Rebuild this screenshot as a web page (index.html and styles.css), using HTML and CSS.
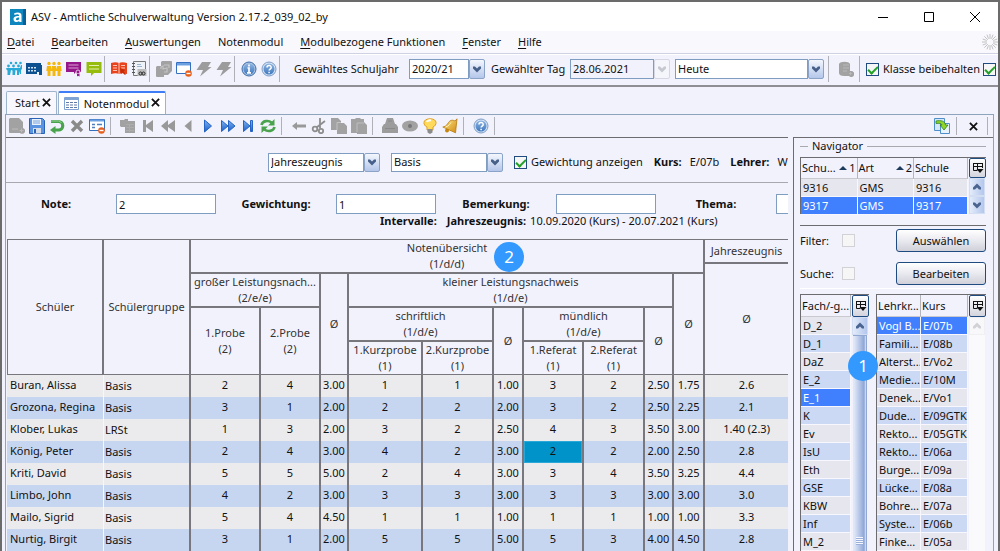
FILE: index.html
```html
<!DOCTYPE html>
<html lang="de">
<head>
<meta charset="utf-8">
<title>ASV - Amtliche Schulverwaltung</title>
<link rel="stylesheet" href="styles.css">
</head>
<body>
<svg class="defs" width="0" height="0" aria-hidden="true">
  <defs>
    <linearGradient id="blue" x1="0" y1="0" x2="0" y2="1"><stop offset="0" stop-color="#7db4f0"/><stop offset="1" stop-color="#1a5fc8"/></linearGradient>
    <linearGradient id="disc" x1="0" y1="0" x2="0" y2="1"><stop offset="0" stop-color="#8db4e2"/><stop offset="1" stop-color="#3f78bd"/></linearGradient>
    <linearGradient id="gold" x1="0" y1="0" x2="1" y2="1"><stop offset="0" stop-color="#ffe98a"/><stop offset="1" stop-color="#d08a10"/></linearGradient>
    <symbol id="help" viewBox="0 0 16 16"><circle cx="8" cy="8" r="7" fill="#d5e3f5" stroke="#7d9cc6"/><circle cx="8" cy="8" r="5.5" fill="url(#disc)"/><path d="M6 6.600c0-2.800 4.200-2.700 4.200-.2 0 1.600-2.100 1.700-2.100 3.200M8.100 10.800v1.400" fill="none" stroke="#fff" stroke-width="1.500"/></symbol>
    <symbol id="columns" viewBox="0 0 12 12"><path d="M1 1.500h10M1.500 1v7.500h4M10.500 1v5M1 4.500h10M5.500 1v7" fill="none" stroke="#111"/><path d="M4.500 7h7L8 11z" fill="#111"/></symbol>
    <symbol id="chev" viewBox="0 0 10 8"><path d="M1 1.500h2L5 3.500l2-2h2V3.500l-4 4-4-4z" fill="currentColor"/></symbol>
    <symbol id="close" viewBox="0 0 10 10"><path d="M1 1l8 8M9 1L1 9" fill="none" stroke="#111" stroke-width="2"/></symbol>
  </defs>
</svg>

<div class="window">
  <header class="titlebar">
    <svg class="logo" viewBox="0 0 16 16"><rect width="16" height="16" fill="#0d87bd"/><path d="M13 0h3v16h-3z" fill="#075f99"/><path d="M4 4.500C7 3 11.500 2.900 11.500 6.500V13H9.300v-1C7 14 3.500 13.200 3.500 10.300 3.500 7.500 6.500 7 9.100 7c0-2.300-2.500-1.900-4.500-.900zM9.200 8.500c-5 0-3.500 4.600 0 1.800z" fill="#fff"/></svg>
    <h1 class="title">ASV - Amtliche Schulverwaltung Version 2.17.2_039_02_by</h1>
    <div class="winbuttons">
      <button aria-label="Minimieren"><svg viewBox="0 0 10 10"><path d="M0 5.500h10" stroke="#000"/></svg></button>
      <button aria-label="Maximieren"><svg viewBox="0 0 10 10"><path d="M.5.5h9v9h-9z" fill="none" stroke="#000"/></svg></button>
      <button aria-label="Schließen"><svg viewBox="0 0 10 10"><path d="M0 0l10 10M10 0L0 10" stroke="#000"/></svg></button>
    </div>
  </header>

  <nav class="menubar">
    <a href="#"><u>D</u>atei</a><a href="#"><u>B</u>earbeiten</a><a href="#"><u>A</u>uswertungen</a><a href="#">Notenmodul</a><a href="#"><u>M</u>odulbezogene Funktionen</a><a href="#"><u>F</u>enster</a><a href="#"><u>H</u>ilfe</a>
    <svg class="spinner" viewBox="0 0 16 16"><path d="M8 0v5M8 11v5M0 8h5M11 8h5M2.300 2.300l3.500 3.500M10.200 10.200l3.500 3.500M13.700 2.300l-3.500 3.500M5.800 10.200l-3.500 3.500M5 .7l1.500 4M9.500 11.300l1.500 4M11 .7L9.500 4.700M6.500 11.300l-1.500 4M.7 5l4 1.500M11.300 9.500l4 1.500M.7 11l4-1.500M11.300 6.500l4-1.500" stroke="#bbb" stroke-width=".9"/></svg>
  </nav>

  <div class="mainbar">
    <button class="tool" aria-label="Schüler"><svg viewBox="0 0 16 16"><g fill="#29a9d6"><circle cx="5" cy="2" r="1.300"/><circle cx="10" cy="2" r="1.300"/><circle cx="14.500" cy="2" r="1.300"/><circle cx="2.500" cy="5" r="1.400"/><circle cx="7.500" cy="5" r="1.400"/><circle cx="12.500" cy="5" r="1.400"/><path d="M.5 7h13.500l1-3h1v4l-1 1v4h-1l-.5-3-.5 4h-2V9.500L9.500 9l-.500 5H6.500V9.500L5 9l-1 5H1.500V9.500L0 8z"/></g></svg></button>
    <button class="tool" aria-label="Schule"><svg viewBox="0 0 16 16"><path d="M0 2h15v2h1v10h-3v-3h-2v2H0z" fill="#0d4f8f"/><path d="M2 6h2v1.500H2zM5 6h2v1.500H5zM8 6h2v1.500H8zM2 9h2v1.500H2zM5 9h2v1.500H5zM8 9h2v1.500H8z" fill="#cfe0f0"/></svg></button>
    <button class="tool" aria-label="Klassen"><svg viewBox="0 0 16 16"><g fill="#f4b70e"><circle cx="3" cy="2.500" r="1.700"/><circle cx="8" cy="2.500" r="1.700"/><circle cx="13" cy="2.500" r="1.700"/><path d="M1 5h4l.7 5H4.500v5h-3v-5H.3zM6 5h4l.7 5H9.500v5h-3v-5H5.300zM11 5h4l.7 5h-1.200v5h-3v-5h-1.200z"/></g></svg></button>
    <button class="tool" aria-label="Lehrer"><svg viewBox="0 0 16 16"><path d="M0 1h15v10h-5l-2 2v-2H0z" fill="#95178a"/><path d="M2.500 4h10M2.500 7h10" stroke="#d9a3d5"/><circle cx="12" cy="11" r="2" fill="#95178a" stroke="#e8c8e6"/><path d="M11 13v2.500l1-.8 1.500.8V13z" fill="#95178a"/></svg></button>
    <button class="tool" aria-label="Unterricht"><svg viewBox="0 0 16 16"><path d="M.5 1h15v11H8l-3 3v-3H.5z" fill="#96bd0d"/><path d="M3 4.500h10M3 8h10" stroke="#e3efb0"/></svg></button>
    <i class="sep"></i>
    <button class="tool" aria-label="Notenbuch"><svg viewBox="0 0 16 16"><path d="M0 2c3-1 6-1 8 0 2-1 5-1 8 0v11c-3-1-6-1-8 0-2-1-5-1-8 0z" fill="#e8431c"/><path d="M2 4.500h4M2 7h4M2 9.500h4M10 4.500h4M10 7h4M8 2v11" stroke="#ffc6b5"/><path d="M9 7l1 6 1.500-1.500L14 14l1-1-2.500-2.500L14 9z" fill="#c22c08"/></svg></button>
    <button class="tool" aria-label="Adressbuch"><svg viewBox="0 0 16 16"><path d="M2.500.5h12v14h-12z" fill="#eef1f6" stroke="#777"/><path d="M1 2.500h3M1 5.500h3M1 8.500h3M1 11.500h3" stroke="#555"/><path d="M6 3.500h4M6 5.500h5" stroke="#9db4d0"/><rect x="6.500" y="8" width="9" height="7" fill="#bbb"/><path d="M8 12.500c0-2 3-2 3 0s3 2 3 0-3-2-3 0-3 2-3 0z" fill="none" stroke="#222"/></svg></button>
    <i class="sep"></i>
    <button class="tool" aria-label="Fenster wechseln" disabled><svg viewBox="0 0 16 16"><path d="M6 0h9a1 1 0 0 1 1 1v9l-4 4H8v2H1a1 1 0 0 1-1-1V6l1-1h4V1z" fill="#a2a2a2"/><path d="M5 8V6l2-1v3l4-1v4H8M8 4h5v3" fill="none" stroke="#c4c4c4" stroke-width="1.200"/></svg></button>
    <button class="tool" aria-label="Fenster schließen"><svg viewBox="0 0 16 16"><path d="M.5 1.500h14v11h-14z" fill="#fff" stroke="#3570c0"/><path d="M1 2h13v2.500H1z" fill="#6ca0e0"/><circle cx="12.500" cy="12.500" r="3.300" fill="#e8601c"/><path d="M10.500 12.500h4" stroke="#fff" stroke-width="1.400"/></svg></button>
    <button class="tool" aria-label="Aktion 1" disabled><svg viewBox="0 0 16 16"><path d="M6 1h9l-3 5h3.500L4 15.500 7 9H.5z" fill="#9c9c9c"/></svg></button>
    <button class="tool" aria-label="Aktion 2" disabled><svg viewBox="0 0 16 16"><path d="M6 1h9l-3 5h3.500L4 15.500 7 9H.5z" fill="#9c9c9c"/></svg></button>
    <i class="sep"></i>
    <button class="tool" aria-label="Information"><svg viewBox="0 0 16 16"><circle cx="8" cy="8" r="7" fill="#a9c2e2" stroke="#3f6da8"/><circle cx="8" cy="8" r="5.500" fill="url(#disc)"/><path d="M8 3.500v2M6.500 7H8v4.500M6 11.800h4" fill="none" stroke="#fff" stroke-width="1.700"/></svg></button>
    <button class="tool" aria-label="Hilfe"><svg><use href="#help"/></svg></button>
    <i class="sep"></i>
    <label class="year-label" for="year">Gewähltes Schuljahr</label>
    <span class="combo combo-year"><select id="year"><option>2020/21</option></select><i><svg><use href="#chev"/></svg></i></span>
    <label class="day-label" for="day">Gewählter Tag</label>
    <span class="combo combo-day off"><input id="day" type="text" value="28.06.2021"><i><svg><use href="#chev"/></svg></i></span>
    <span class="combo combo-today"><select aria-label="Stichtag"><option>Heute</option></select><i><svg><use href="#chev"/></svg></i></span>
    <i class="sep"></i>
    <button class="tool wide" aria-label="Daten" disabled><svg viewBox="0 0 16 16"><path d="M1 3c1-3 10-3 11 0v7h1a3 3 0 1 1-2 5H6c-3 0-5-1-5-3z" fill="#a2a2a2"/><path d="M5 4h6M5 7h6M5 10h4M12.500 11v3M11 12.500h3" stroke="#b8b8b8"/></svg></button>
    <i class="sep"></i>
    <label class="check"><input type="checkbox" checked>Klasse beibehalten</label>
    <input type="checkbox" checked aria-label="Fach beibehalten">
  </div>

  <main class="workspace">
    <div class="tabs">
      <button class="tab">Start<svg><use href="#close"/></svg></button>
      <button class="tab active"><svg class="grid-icon" viewBox="0 0 15 13"><path d="M.5.5h14v12H.5z" fill="#fff" stroke="#7fa3d4"/><path d="M1 2h13" stroke="#7fa3d4" stroke-width="2"/><path d="M2 5.500h11M2 8h11M2 10.500h11" stroke="#5d7ba6" stroke-dasharray="3 1"/></svg>Notenmodul<svg><use href="#close"/></svg></button>
    </div>

    <div class="panel">
      <div class="modulebar">
        <button class="tool" aria-label="Neu" disabled><svg viewBox="0 0 16 16"><path d="M1 0h9l4 4v6a3 3 0 1 1-3 5H1a1 1 0 0 1-1-1V1z" fill="#a2a2a2"/><path d="M3 11h6M12.500 10.500v4M10.500 12.500h4" stroke="#bbb"/></svg></button>
        <button class="tool" aria-label="Speichern"><svg viewBox="0 0 16 16"><path d="M.5.5h13l2 2v13H.5z" fill="#5a94e0" stroke="#2c62b4"/><path d="M3 1h9v6H3z" fill="#e8f1fc"/><path d="M4 3h7M4 5h7" stroke="#7ba4dc"/><path d="M4 10h8v5.500H4z" fill="#d8dfe9"/><path d="M5 11h2v4H5z" fill="#2c62b4"/></svg></button>
        <button class="tool" aria-label="Rückgängig"><svg viewBox="0 0 16 16"><path d="M2 3.500h7.500a4 4 0 0 1 0 8.500H6" fill="none" stroke="#49a34c" stroke-width="3.200"/><path d="M6.500 8v8L1 12z" fill="#49a34c"/><path d="M2 3h7.500a4 4 0 0 1 3 2" fill="none" stroke="#9cd49b"/></svg></button>
        <button class="tool" aria-label="Löschen" disabled><svg viewBox="0 0 16 16"><path d="M3 3l10 10M13 3L3 13" stroke="#8a8a8a" stroke-width="3.400"/></svg></button>
        <button class="tool" aria-label="Formular schließen"><svg viewBox="0 0 16 16"><path d="M.5 1.500h15v11H.5z" fill="#fff" stroke="#3570c0"/><path d="M1 2.500h14" stroke="#6ca0e0" stroke-width="2"/><path d="M3 6.500h3M8 6.500h5M3 9.500h3" stroke="#4f7fbf" stroke-width="1.500"/><circle cx="12.500" cy="12.500" r="3.300" fill="#e8601c"/><path d="M10.500 12.500h4" stroke="#fff" stroke-width="1.400"/></svg></button>
        <i class="sep"></i>
        <button class="tool" aria-label="Liste" disabled><svg viewBox="0 0 16 16"><path d="M0 2h4l1-1h3v2h7v12H5V9H1L0 8z" fill="#a2a2a2"/><path d="M6 6.500h8M6 9.500h8M6 12.500h8M9.500 6v8" stroke="#adadad"/></svg></button>
        <button class="tool" aria-label="Erster" disabled><svg viewBox="0 0 16 16"><path d="M3 2h3v5l7-5v12L6 9v5H3z" fill="#999"/></svg></button>
        <button class="tool" aria-label="Schnell zurück" disabled><svg viewBox="0 0 16 16"><path d="M8 2v5l7-5v12L8 9v5L1 8z" fill="#999"/></svg></button>
        <button class="tool" aria-label="Zurück" disabled><svg viewBox="0 0 16 16"><path d="M11.500 2v12L4.500 8z" fill="#999"/></svg></button>
        <button class="tool" aria-label="Weiter"><svg viewBox="0 0 16 16"><path d="M4.500 2v12l7-6z" fill="url(#blue)" stroke="#2563c4"/></svg></button>
        <button class="tool" aria-label="Schnell vor"><svg viewBox="0 0 16 16"><path d="M1.500 2.500v11L8 8zM8.500 2.500v11L15 8z" fill="url(#blue)" stroke="#2563c4"/></svg></button>
        <button class="tool" aria-label="Letzter"><svg viewBox="0 0 16 16"><path d="M3.500 2.500v11L10 8zM10.500 2.500h2v11h-2z" fill="url(#blue)" stroke="#2563c4"/></svg></button>
        <button class="tool" aria-label="Aktualisieren"><svg viewBox="0 0 16 16"><g fill="none" stroke="#49a34c" stroke-width="2.600"><path d="M1.500 7c1-4.500 7-5 10-2.500"/><path d="M14.500 9c-1 4.500-7 5-10 2.500"/></g><path d="M14.500 1v6.500H8zM1.500 15V8.500H8z" fill="#49a34c"/></svg></button>
        <i class="sep"></i>
        <button class="tool" aria-label="Pfeil" disabled><svg viewBox="0 0 16 16"><path d="M1 8l5-4v2.500h9v3H6V12z" fill="#999"/></svg></button>
        <button class="tool" aria-label="Ausschneiden" disabled><svg viewBox="0 0 16 16"><g fill="none" stroke="#8d8d8d" stroke-width="1.800"><circle cx="4" cy="11" r="2.300"/><circle cx="10" cy="13" r="2.200"/><path d="M14 3L5.500 9.500M9 0v10.500"/></g></svg></button>
        <button class="tool" aria-label="Kopieren" disabled><svg viewBox="0 0 16 16"><path d="M0 0h7l3 3v2h3l3 3v8H6v-4H0z" fill="#a2a2a2"/><path d="M6 12V4.500h4" fill="none" stroke="#c2c2c2"/></svg></button>
        <button class="tool" aria-label="Einfügen" disabled><svg viewBox="0 0 16 16"><path d="M0 1h4l1-1h4l1 1h3v3l3 3v9H6v-1H0z" fill="#a2a2a2"/><path d="M6 14V5h7" fill="none" stroke="#bdbdbd"/></svg></button>
        <i class="sep"></i>
        <button class="tool" aria-label="Drucken" disabled><svg viewBox="0 0 16 16"><path d="M5 0h6l2 6h1l2 3v6H0V9l2-3h1z" fill="#9c9c9c"/><path d="M3 10.500h10M6 3h4" stroke="#8a8a8a"/></svg></button>
        <button class="tool" aria-label="Vorschau" disabled><svg viewBox="0 0 16 16"><ellipse cx="8" cy="8" rx="8" ry="5.500" fill="#a2a2a2"/><circle cx="8" cy="8" r="2" fill="#777"/></svg></button>
        <button class="tool" aria-label="Hinweis"><svg viewBox="0 0 16 16"><path d="M8 .8c8 0 7 6.700 3 8.200v3H5V9C1 7.500 0 .8 8 .8z" fill="#ffd95a" stroke="#dfa020"/><path d="M5 4c.5-1.500 3-2 4-1.500" stroke="#fff" stroke-width="2" fill="none"/><path d="M5.500 11h5v3.500L8 16l-2.500-1.500z" fill="#8c8c8c"/></svg></button>
        <button class="tool" aria-label="Erinnerung"><svg viewBox="0 0 16 16"><circle cx="5" cy="12.500" r="2" fill="#c9850c"/><path d="M15 .8l-1.500 14L.8 9C4.500 8.500 5 6.500 6.500 4.500c2-3 4.500-2.500 6.500-1.500z" fill="url(#gold)" stroke="#b8780a" stroke-width=".8"/><path d="M3.500 9C7 8 8 6 9 4.500" fill="none" stroke="#fff3b8"/></svg></button>
        <i class="sep"></i>
        <button class="tool" aria-label="Hilfe"><svg><use href="#help"/></svg></button>
        <i class="sep"></i>
        <span class="spacer"></span>
        <button class="tool" aria-label="Exportieren"><svg viewBox="0 0 16 16"><path d="M.5.500h10v12H.5z" fill="#d4e8fa" stroke="#4e8ecb"/><path d="M6.500 5.500h9v10h-9z" fill="#e6f2fd" stroke="#4e8ecb"/><path d="M2 3c5-1 9 0 9.500 4H14l-4 5-4-5h2C7.500 5.500 5 5 2 5.500z" fill="#8fd42a" stroke="#2d7d1e" stroke-width=".8"/></svg></button>
        <i class="sep"></i>
        <button class="tool" aria-label="Modul schließen"><svg class="small"><use href="#close"/></svg></button>
        <i class="sep"></i>
      </div>

      <div class="split">
        <section class="content">
          <div class="filters">
            <span class="combo combo-filter"><select aria-label="Zeugnisart"><option>Jahreszeugnis</option></select><i><svg><use href="#chev"/></svg></i></span>
            <span class="combo combo-filter"><select aria-label="Schülergruppe"><option>Basis</option></select><i><svg><use href="#chev"/></svg></i></span>
            <label class="check"><input type="checkbox" checked>Gewichtung anzeigen</label>
            <span><b>Kurs:</b>E/07b</span>
            <span><b>Lehrer:</b>W</span>
          </div>
          <div class="entry">
            <div class="fields">
              <label for="note">Note:</label><input id="note" type="text" value="2">
              <label for="gew">Gewichtung:</label><input id="gew" type="text" value="1">
              <label for="bem">Bemerkung:</label><input id="bem" type="text">
              <label for="thema">Thema:</label><input id="thema" type="text">
            </div>
            <p class="intervals"><b>Intervalle:</b><b>Jahreszeugnis:</b>10.09.2020 (Kurs) - 20.07.2021 (Kurs)</p>
          </div>

          <div class="gradewrap">
            <table class="grades">
              <colgroup><col class="c-name"><col class="c-group"><col class="c-p1"><col class="c-p2"><col class="c-a1"><col class="c-k1"><col class="c-k2"><col class="c-a2"><col class="c-r1"><col class="c-r2"><col class="c-a3"><col class="c-a4"><col></colgroup>
              <thead>
                <tr class="h-top"><th rowspan="5">Schüler</th><th rowspan="5">Schülergruppe</th><th colspan="10" rowspan="2">Notenübersicht<br>(1/d/d)</th><th>Jahreszeugnis</th></tr>
                <tr class="h-gap"><th rowspan="4">Ø</th></tr>
                <tr class="h-row"><th colspan="2">großer Leistungsnach...<br>(2/e/e)</th><th rowspan="3">Ø</th><th colspan="6">kleiner Leistungsnachweis<br>(1/d/e)</th><th rowspan="3">Ø</th></tr>
                <tr class="h-row"><th rowspan="2">1.Probe<br>(2)</th><th rowspan="2">2.Probe<br>(2)</th><th colspan="2">schriftlich<br>(1/d/e)</th><th rowspan="2">Ø</th><th colspan="2">mündlich<br>(1/d/e)</th><th rowspan="2">Ø</th></tr>
                <tr class="h-last"><th>1.Kurzprobe<br>(1)</th><th>2.Kurzprobe<br>(1)</th><th>1.Referat<br>(1)</th><th>2.Referat<br>(1)</th></tr>
              </thead>
              <tbody>
                <tr><td>Buran, Alissa</td><td>Basis</td><td>2</td><td>4</td><td>3.00</td><td>1</td><td>1</td><td>1.00</td><td>3</td><td>2</td><td>2.50</td><td>1.75</td><td>2.6</td></tr>
                <tr><td>Grozona, Regina</td><td>Basis</td><td>3</td><td>1</td><td>2.00</td><td>2</td><td>2</td><td>2.00</td><td>3</td><td>2</td><td>2.50</td><td>2.25</td><td>2.1</td></tr>
                <tr><td>Klober, Lukas</td><td>LRSt</td><td>1</td><td>3</td><td>2.00</td><td>3</td><td>2</td><td>2.50</td><td>4</td><td>3</td><td>3.50</td><td>3.00</td><td>1.40 (2.3)</td></tr>
                <tr><td>König, Peter</td><td>Basis</td><td>2</td><td>4</td><td>3.00</td><td>4</td><td>2</td><td>3.00</td><td class="current">2</td><td>2</td><td>2.00</td><td>2.50</td><td>2.8</td></tr>
                <tr><td>Kriti, David</td><td>Basis</td><td>5</td><td>5</td><td>5.00</td><td>2</td><td>4</td><td>3.00</td><td>3</td><td>4</td><td>3.50</td><td>3.25</td><td>4.4</td></tr>
                <tr><td>Limbo, John</td><td>Basis</td><td>4</td><td>2</td><td>3.00</td><td>3</td><td>3</td><td>3.00</td><td>3</td><td>3</td><td>3.00</td><td>3.00</td><td>3.0</td></tr>
                <tr><td>Mailo, Sigrid</td><td>Basis</td><td>5</td><td>4</td><td>4.50</td><td>1</td><td>1</td><td>1.00</td><td>1</td><td>1</td><td>1.00</td><td>1.00</td><td>3.3</td></tr>
                <tr><td>Nurtig, Birgit</td><td>Basis</td><td>3</td><td>1</td><td>2.00</td><td>5</td><td>5</td><td>5.00</td><td>5</td><td>3</td><td>4.00</td><td>4.50</td><td>2.8</td></tr>
              </tbody>
            </table>
            <span class="badge badge-grades">2</span>
          </div>
        </section>

        <aside class="navigator">
          <h2 class="legend">Navigator</h2>
          <div class="list schools">
            <table>
              <colgroup><col><col><col class="c-school"></colgroup>
              <thead><tr><th><span>Schu...<em>1</em></span></th><th><span>Art<em>2</em></span></th><th>Schule</th></tr></thead>
              <tbody><tr><td>9316</td><td>GMS</td><td>9316</td></tr><tr class="sel"><td>9317</td><td>GMS</td><td>9317</td></tr></tbody>
            </table>
            <div class="scroll">
              <button class="colbtn" aria-label="Spalten"><svg><use href="#columns"/></svg></button>
              <button class="arrow" aria-label="Nach oben"><svg class="up"><use href="#chev"/></svg></button>
              <button class="arrow" aria-label="Nach unten"><svg><use href="#chev"/></svg></button>
            </div>
          </div>
          <div class="actions">
            <label for="filter">Filter:</label><input id="filter" class="off" type="checkbox"><button class="action">Auswählen</button>
            <label for="suche">Suche:</label><input id="suche" class="off" type="checkbox"><button class="action">Bearbeiten</button>
          </div>
          <div class="lists">
            <div class="list subjects">
              <table>
                <thead><tr><th>Fach/-g...</th></tr></thead>
                <tbody><tr><td>D_2</td></tr><tr><td>D_1</td></tr><tr><td>DaZ</td></tr><tr><td>E_2</td></tr><tr class="sel"><td>E_1</td></tr><tr><td>K</td></tr><tr><td>Ev</td></tr><tr><td>IsU</td></tr><tr><td>Eth</td></tr><tr><td>GSE</td></tr><tr><td>KBW</td></tr><tr><td>Inf</td></tr><tr><td>M_2</td></tr></tbody>
              </table>
              <div class="scroll">
                <button class="colbtn" aria-label="Spalten"><svg><use href="#columns"/></svg></button>
                <button class="arrow" aria-label="Nach oben"><svg class="up"><use href="#chev"/></svg></button>
                <div class="thumb"><i></i></div>
              </div>
            </div>
            <div class="list courses">
              <table>
                <colgroup><col><col class="c-course"></colgroup>
                <thead><tr><th>Lehrkr...</th><th>Kurs</th></tr></thead>
                <tbody><tr class="sel"><td>Vogl B...</td><td>E/07b</td></tr><tr><td>Famili...</td><td>E/08b</td></tr><tr><td>Alterst...</td><td>E/Vo2</td></tr><tr><td>Medie...</td><td>E/10M</td></tr><tr><td>Denek...</td><td>E/Vo1</td></tr><tr><td>Dude...</td><td>E/09GTK</td></tr><tr><td>Rekto...</td><td>E/05GTK</td></tr><tr><td>Rekto...</td><td>E/06a</td></tr><tr><td>Burge...</td><td>E/09a</td></tr><tr><td>Lücke...</td><td>E/08a</td></tr><tr><td>Bohre...</td><td>E/07a</td></tr><tr><td>Syste...</td><td>E/06b</td></tr><tr><td>Finke...</td><td>E/05a</td></tr></tbody>
              </table>
              <div class="scroll">
                <button class="colbtn" aria-label="Spalten"><svg><use href="#columns"/></svg></button>
                <button class="arrow" aria-label="Nach oben" disabled><svg class="up"><use href="#chev"/></svg></button>
                <div class="track"></div>
              </div>
            </div>
            <span class="badge badge-lists">1</span>
          </div>
        </aside>
      </div>
    </div>
  </main>
</div>
</body>
</html>
```

FILE: styles.css
```css
* { box-sizing: border-box; }

body {
  margin: 0;
  background: #6b6b6b;
  color: #111;
  font: 11px/16px "Noto Sans", "Open Sans", sans-serif;
}

.defs { position: absolute; }

button, input, select { font: inherit; color: inherit; }
button { margin: 0; padding: 0; border: 0; background: none; }
svg { display: block; flex: none; }

.window {
  display: flex;
  flex-direction: column;
  height: 100vh;
  overflow: hidden;
  border: 2px solid #6b6b6b;
  border-bottom: 0;
  background: #f2f2fd;
}

/* Title and menu */
.titlebar {
  display: flex;
  align-items: center;
  flex: none;
  height: 29px;
  padding-left: 8px;
  background: #fff;
}
.logo { width: 16px; height: 16px; }
.title { flex: 1; margin: 0 0 0 5px; font-size: 11px; font-weight: 400; white-space: nowrap; }
.winbuttons { display: flex; }
.winbuttons button { display: grid; place-items: center; width: 46px; height: 28px; }
.winbuttons svg { width: 10px; height: 10px; }

.menubar {
  display: flex;
  align-items: center;
  flex: none;
  gap: 17px;
  height: 23px;
  padding: 0 0 0 5px;
  border-bottom: 1px solid #cfd2e2;
  background: #f8f8fd;
}
.menubar a { color: inherit; text-decoration: none; white-space: nowrap; }
.menubar u { text-underline-offset: 2px; }
.spinner { width: 16px; height: 16px; margin-left: auto; }

/* Toolbars */
.mainbar {
  display: flex;
  align-items: center;
  flex: none;
  height: 31px;
  padding: 0 0 2px 2px;
  border-top: 1px solid #fff;
  white-space: nowrap;
}
.tool { display: grid; place-items: center; flex: none; width: 20px; height: 20px; }
.tool svg { width: 16px; height: 16px; }
.tool svg.small { width: 9px; height: 9px; }
.tool.wide { width: 26px; }
.sep { flex: none; width: 1px; height: 26px; margin-right: 4px; background: #b0b0b8; }
.year-label { width: 125px; padding-left: 10px; }
.day-label { width: 79px; margin-left: 6px; }

.combo { display: flex; flex: none; height: 20px; }
.combo select, .combo input {
  flex: 1;
  min-width: 0;
  padding: 0 2px;
  border: 1px solid #7f9dc0;
  border-radius: 0;
  background: #fff;
  appearance: none;
}
.combo i {
  display: grid;
  place-items: center;
  width: 16px;
  border: 1px solid #8ba3c7;
  border-radius: 2px;
  background: linear-gradient(#f4f7fd, #b4c6ea);
  color: #46608a;
}
.combo i svg { width: 10px; height: 8px; }
.combo.off input { background: #f2f2fd; }
.combo.off i { border-color: #d5d8e4; background: #f5f5fc; color: #c6c8d0; }
.combo-year { width: 76px; }
.combo-day { width: 100px; margin-right: 5px; }
.combo-today { width: 149px; margin-right: 4px; }
.combo-filter { width: 112px; }

input[type="checkbox"] {
  display: grid;
  place-items: center;
  flex: none;
  width: 13px;
  height: 13px;
  margin: 0;
  border: 1px solid #1f4b80;
  background: #f6f6f6;
  appearance: none;
}
input[type="checkbox"]:checked::after {
  content: "";
  width: 4px;
  height: 8px;
  margin-bottom: 2px;
  border: solid #22a028;
  border-width: 0 2px 2px 0;
  transform: rotate(45deg);
}
input[type="checkbox"].off { border-color: #d2d2d6; }
.check { display: flex; align-items: center; gap: 4px; }
.mainbar .check { width: 119px; padding-left: 2px; }

/* Tabs */
.workspace {
  display: flex;
  flex: 1;
  flex-direction: column;
  min-height: 0;
  padding: 4px 4px 0 3px;
  border-top: 2px solid #8e8e94;
}
.tabs { display: flex; align-items: flex-end; gap: 1px; flex: none; padding-left: 1px; }
.tab {
  display: flex;
  align-items: center;
  gap: 2px;
  height: 23px;
  padding: 0 5px 0 8px;
  border: 1px solid #9db3cc;
  border-bottom: 0;
  border-radius: 2px 2px 0 0;
  background: #f7f7fd;
}
.tab svg { width: 9px; height: 9px; margin-bottom: 2px; }
.tab .grid-icon { width: 15px; height: 13px; margin: 0 3px 0 -3px; }
.tab.active { border-top: 2px solid #3f7cf8; background: #fff; }

.panel {
  display: flex;
  flex: 1;
  flex-direction: column;
  min-height: 0;
  border: 1px solid #8ea4bd;
  border-bottom: 0;
}
.modulebar { display: flex; align-items: center; flex: none; height: 22px; padding-left: 1px; }
.modulebar .sep { height: 18px; margin: 0 7px 0 3px; }
.modulebar .spacer { flex: 1; }
.modulebar .spacer ~ .sep { margin-right: 5px; }
.modulebar .spacer ~ .tool { width: 22px; }

.split { display: flex; flex: 1; gap: 5px; min-height: 0; }

/* Grades */
.content { flex: 1; min-width: 0; overflow: hidden; border-top: 1px solid #6c6c70; }
.filters {
  display: flex;
  align-items: center;
  gap: 11px;
  height: 45px;
  padding: 4px 0 0 262px;
  border-bottom: 1px solid #a8a8ae;
  white-space: nowrap;
}
.filters .combo { height: 19px; }
.filters b { margin-right: 8px; }
.entry { height: 56px; padding-top: 11px; }
.fields { display: flex; align-items: center; margin-left: -10px; }
.fields label { flex: none; width: 120px; font-weight: 700; text-align: center; }
.fields input { flex: none; width: 100px; height: 20px; padding: 0 2px; border: 1px solid #7f9dc0; background: #fff; }
.intervals { margin: 0; padding-left: 374px; line-height: 14px; white-space: nowrap; }
.intervals b { margin-right: 4px; }
.intervals b:first-child { margin-right: 10px; }

.gradewrap { position: relative; padding-left: 1px; }
.grades {
  width: 100%;
  border-top: 1px solid #77777d;
  border-spacing: 0;
  table-layout: fixed;
}
.c-name { width: 97px; }
.c-group { width: 87px; }
.c-p1 { width: 70px; }
.c-p2, .c-r1 { width: 60px; }
.c-a1 { width: 28px; }
.c-k1 { width: 74px; }
.c-k2 { width: 71px; }
.c-a2 { width: 30px; }
.c-r2 { width: 61px; }
.c-a3 { width: 29px; }
.c-a4 { width: 31px; }
.grades th {
  padding: 0;
  border: solid #77777d;
  border-width: 0 2px 2px 0;
  color: #333;
  font-weight: 400;
  line-height: 16px;
  white-space: nowrap;
}
.grades .h-gap th, .grades .h-top th:last-child { border-right: 0; }
.grades th[rowspan="5"], .grades th[rowspan="4"], .grades th[rowspan="3"],
.grades th[rowspan="2"]:not([colspan]), .grades .h-last th { border-bottom-width: 1px; }
.grades th[rowspan="5"]:first-child { border-left-width: 1px; }
.h-top { height: 24px; }
.h-gap { height: 10px; }
.h-row { height: 34px; }
.h-last { height: 33px; }
.grades td {
  height: 22px;
  padding: 0 0 2px;
  border-right: 2px solid #77777d;
  text-align: center;
  line-height: 16px;
  white-space: nowrap;
}
.grades td:first-child { padding-left: 3px; border-right: 1px solid #f7f7fb; text-align: left; }
.grades td:nth-child(2) { padding: 0 0 0 1px; text-align: left; }
.grades td:last-child { border-right: 0; }
.grades tbody tr:nth-child(odd) { background: #ebebee; }
.grades tbody tr:nth-child(even) { background: #c6d6f1; }
.grades td.current { background: #0093ca; box-shadow: inset 0 0 0 1px #2aa8d8; }

.badge {
  position: absolute;
  display: grid;
  place-items: center;
  width: 30px;
  height: 30px;
  border-radius: 50%;
  background: #3399ff;
  color: #fff;
  font-size: 17px;
}
.badge-grades { top: 3px; left: 488px; }
.badge-lists { top: 57px; left: 48px; }

/* Navigator */
.navigator {
  display: flex;
  flex: none;
  flex-direction: column;
  width: 200px;
  padding: 0 7px 0 6px;
  border: solid #6c6c70;
  border-width: 1px 0 0 1px;
}
.legend { display: flex; align-items: center; gap: 4px; margin: 0 0 3px; font-size: 11px; font-weight: 400; line-height: 16px; }
.legend::before, .legend::after { content: ""; height: 1px; background: #a8a8ae; }
.legend::before { width: 8px; }
.legend::after { flex: 1; }

.list { display: flex; gap: 1px; border: solid #6c6c70; border-width: 1px 0 0 1px; }
.list table { flex: 1; border-spacing: 0; table-layout: fixed; width: 0; align-self: flex-start; }
.list th, .list td { overflow: hidden; padding: 0 0 0 2px; text-align: left; font-weight: 400; white-space: nowrap; line-height: 16px; }
.list th { height: 21px; padding: 0 1px; border-right: 1px solid #b4b4bb; border-bottom: 1px solid #c9c9cf; background: #f2f2fd; }
.list th span { display: flex; align-items: center; }
.list th em { display: flex; align-items: center; gap: 2px; margin-left: auto; font-style: normal; }
.list th em::before { content: ""; border: solid transparent; border-width: 0 4px 4px; border-bottom-color: #1f3b5c; }
.list td { height: 18px; border: solid #f7f7fd; border-width: 0 1px 1px 0; background: #e6e6ef; }
.list tbody tr:nth-child(even) td { background: #ccd9f5; }
.list tbody tr.sel td { background: #4080ff; color: #fff; }
.c-school { width: 54px; }
.c-course { width: 47px; }

.scroll { display: flex; flex: none; flex-direction: column; width: 17px; }
.colbtn {
  display: grid;
  place-items: center;
  width: 17px;
  height: 21px;
  border: 1px solid #1f4b80;
  border-radius: 2px;
  background: linear-gradient(#fff, #d4d4de);
}
.colbtn svg { width: 12px; height: 12px; }
.arrow {
  display: grid;
  place-items: center;
  flex: none;
  width: 16px;
  height: 18px;
  border: 1px solid #d3def2;
  background: linear-gradient(90deg, #e4ecfb, #b3c6ec);
  color: #4a6491;
}
.arrow svg { width: 10px; height: 8px; }
.arrow .up { transform: scaleY(-1); }
.arrow:disabled { border-color: #f0f0f2; background: #f8f8fa; color: #d2d2d6; }
.thumb {
  display: flex;
  align-items: flex-end;
  justify-content: center;
  flex: 1;
  width: 14px;
  margin-left: 1px;
  padding-bottom: 6px;
  border: solid #92a8d4;
  border-width: 1px 1px 0 0;
  background: linear-gradient(90deg, #dfe7f8 10%, #8ea6d6 85%, #dfe7f8);
}
.thumb i { width: 7px; height: 8px; background: repeating-linear-gradient(#f4f7fd 0 1px, #9ab0dc 1px 2px); }
.track { flex: 1; width: 16px; background: #fafafc; }

.schools { flex: none; height: 57px; }
.actions {
  display: grid;
  grid-template-columns: 42px 1fr 90px;
  align-items: center;
  row-gap: 10px;
  margin-top: 11px;
  padding: 3px 0;
  border-top: 1px solid #6c6c70;
  border-bottom: 1px solid #fff;
}
.action {
  height: 23px;
  border: 1px solid #1f4b80;
  border-radius: 3px;
  background: linear-gradient(#fff, #e9e9f0 50%, #d0d0da);
}
.lists { position: relative; display: flex; flex: 1; gap: 7px; min-height: 0; margin-top: 5px; }
.lists .list { overflow: hidden; }
.lists .list th { height: 22px; }
.lists .colbtn { height: 22px; }
.subjects { width: 69px; }
.courses { flex: 1; }
```
